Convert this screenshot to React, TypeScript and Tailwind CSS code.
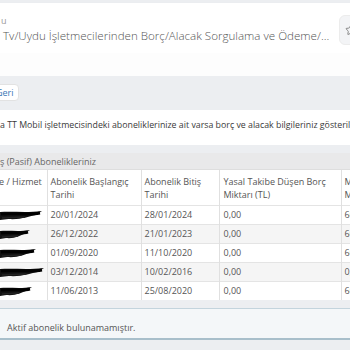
import { Star } from 'lucide-react';

const rows = [
  { start: '20/01/2024', end: '28/01/2024', debt: '0,00', last: '60,00', w: 42 },
  { start: '26/12/2022', end: '21/01/2023', debt: '0,00', last: '60,00', w: 30 },
  { start: '01/09/2020', end: '11/10/2020', debt: '0,00', last: '60,00', w: 36 },
  { start: '03/12/2014', end: '10/02/2016', debt: '0,00', last: '0,00', w: 44 },
  { start: '11/06/2013', end: '25/08/2020', debt: '0,00', last: '60,00', w: 32 },
];

// redaction scribble drawn over the first column
function Scribble({ w }: { w: number }) {
  return (
    <svg width={w} height="12" viewBox={`0 0 ${w} 12`} className="block">
      <path
        d={`M0 3 C ${w * 0.3} 2, ${w * 0.6} 4, ${w} 2 L ${w - 6} 6 C ${w * 0.7} 7, ${w * 0.5} 11, ${w * 0.2} 10 L 0 11 Z`}
        fill="#111"
      />
      <path d={`M1 5 C ${w * 0.4} 4, ${w * 0.7} 6, ${w - 2} 4`} stroke="#000" strokeWidth="3" fill="none" />
      <path d={`M2 9 L ${w * 0.6} 8`} stroke="#222" strokeWidth="1.5" />
    </svg>
  );
}

export default function App() {
  return (
    <div className="w-[350px] h-[350px] overflow-hidden bg-[#eceef1] font-['Open_Sans','Liberation_Sans',sans-serif] text-[#555]">
      {/* page header card */}
      <div className="pt-[3px]">
        <div className="h-[50px] bg-white flex items-start justify-between shadow-[0_1px_2px_rgba(0,0,0,0.08)]">
          <div className="flex flex-col pl-[1px] pt-[12px]">
            <span className="text-[9px] leading-[12px] text-[#999]">u</span>
            <span className="pl-[2px] text-[11.6px] leading-[18px] font-light text-[#555] whitespace-nowrap">
              Tv/Uydu İşletmecilerinden Borç/Alacak Sorgulama ve Ödeme/...
            </span>
          </div>
          <div className="mt-[12px] -mr-[19px] w-[30px] h-[30px] rounded-md bg-[#f3f4f6] border border-[#ececec] flex items-start pl-[5px] pt-[8px] shrink-0">
            <Star size={12} className="text-[#888]" />
          </div>
        </div>
      </div>

      <div className="h-[23px] bg-[#fdfdfd]" />

      {/* back button bar */}
      <div className="h-[34px] flex items-center pb-[2px]">
        <button className="-ml-[21px] h-[17px] pl-[16px] pr-[4px] bg-white border border-[#e2e2e2] rounded-sm text-[9px] leading-none text-[#3b78b6]">
          Geri
        </button>
      </div>

      {/* info text */}
      <div className="h-[35px] bg-white flex items-center pb-[4px]">
        <p className="text-[8.8px] whitespace-nowrap text-[#3a3a3a]">
          a TT Mobil işletmecisindeki aboneliklerinize ait varsa borç ve alacak bilgileriniz gösterilmektedir.
        </p>
      </div>

      <div className="h-[8px]" />

      {/* past subscriptions panel */}
      <div className="bg-white">
        <div className="h-[17px] bg-[#e9e9ea] border-b border-[#dedede] flex items-center pt-[2px] text-[9px] text-[#666] whitespace-nowrap">
          ş (Pasif) Abonelikleriniz
        </div>
        <table className="table-fixed border-collapse w-[420px] text-[9px] text-[#555]">
          <colgroup>
            <col className="w-[47px]" />
            <col className="w-[94px]" />
            <col className="w-[78px]" />
            <col className="w-[122px]" />
            <col className="w-[79px]" />
          </colgroup>
          <thead>
            <tr className="h-[35px] align-top">
              <th className="font-normal text-left leading-[13px] pt-[5px] pl-0 whitespace-nowrap border-r border-[#e0e0e0]">
                <span className="-ml-[1px]">e / Hizmet</span>
              </th>
              <th className="font-normal text-left leading-[13px] pt-[5px] pl-[3px] border-r border-[#e0e0e0]">
                Abonelik Başlangıç Tarihi
              </th>
              <th className="font-normal text-left leading-[13px] pt-[5px] pl-[3px] border-r border-[#e0e0e0]">
                Abonelik Bitiş Tarihi
              </th>
              <th className="font-normal text-left leading-[13px] pt-[5px] pl-[4px] border-r border-[#e0e0e0]">
                Yasal Takibe Düşen Borç Miktarı (TL)
              </th>
              <th className="font-normal text-left leading-[13px] pt-[5px] pl-[3px]">
                Mahsup Edilen Miktar (TL)
              </th>
            </tr>
          </thead>
          <tbody>
            {rows.map((r, i) => (
              <tr key={i} className={`h-[19px] border-t border-[#e4e4e4] ${i % 2 === 1 ? 'bg-[#f5f5f5]' : 'bg-white'}`}>
                <td className="p-0 border-r border-[#e0e0e0]">
                  <Scribble w={r.w} />
                </td>
                <td className="pl-[3px] py-0 border-r border-[#e0e0e0]">{r.start}</td>
                <td className="pl-[3px] py-0 border-r border-[#e0e0e0]">{r.end}</td>
                <td className="pl-[4px] py-0 border-r border-[#e0e0e0]">{r.debt}</td>
                <td className="pl-[3px] py-0">{r.last}</td>
              </tr>
            ))}
          </tbody>
        </table>
      </div>

      <div className="h-[8px]" />

      {/* active subscriptions alert */}
      <div className="h-[32px] bg-[#f4f7f9] border-t border-[#c3d4dd] border-b-2 border-b-[#a8bfcb] flex items-center pl-[7px] pt-[9px]">
        <span className="text-[9px] text-[#555]">Aktif abonelik bulunamamıştır.</span>
      </div>
    </div>
  );
}
